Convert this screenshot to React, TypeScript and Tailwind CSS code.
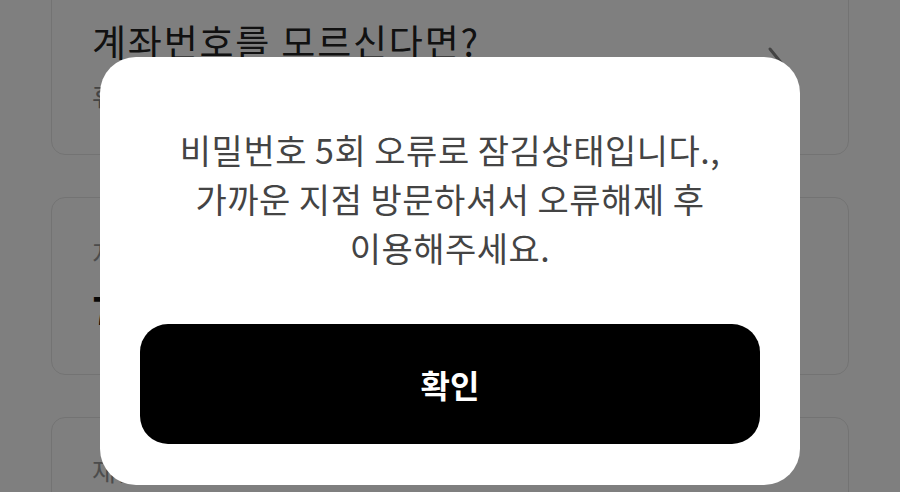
import React from "react";

export default function App() {
  return (
    <div className="relative h-[492px] w-[900px] overflow-hidden bg-white font-['Noto_Sans_CJK_KR','Noto_Sans',sans-serif]">
      <div className="flex flex-col gap-[42px] px-[51px] -mt-[20px]">
        <div className="flex items-center justify-between rounded-[14px] border border-[#e6e6e6] pl-[40px] pr-[62px] pt-[37px] pb-[42px]">
          <div className="flex flex-col">
            <div className="text-[37px] leading-[46px] tracking-[1.8px] text-[#222]">계좌번호를 모르신다면?</div>
            <div className="mt-[14px] text-[26px] leading-[34px] text-[#888]">휴대폰 본인인증으로 조회할 수 있어요</div>
          </div>
          <svg width="20" height="40" viewBox="0 0 20 40" fill="none">
            <path d="M4 4 L17 20 L4 36" stroke="#888" strokeWidth="3" strokeLinecap="round" strokeLinejoin="round" />
          </svg>
        </div>
        <div className="flex flex-col rounded-[14px] border border-[#e6e6e6] px-[40px] pt-[38px] pb-[41px]">
          <div className="text-[26px] leading-[34px] text-[#999]">지급계좌</div>
          <div className="mt-[15px] text-[38px] leading-[48px] font-bold text-[#111]">7,000,000원</div>
        </div>
        <div className="flex h-[120px] flex-col rounded-[14px] border border-[#e6e6e6] px-[40px] pt-[36px]">
          <div className="text-[26px] leading-[32px] text-[#999]">재발급 사유</div>
        </div>
      </div>

      <div className="absolute inset-0 flex items-start justify-center bg-black/50 pt-[57px]">
        <div className="flex w-[700px] flex-col rounded-[36px] bg-white px-[40px] pt-[68px] pb-[41px]">
          <div className="text-center text-[34px] leading-[49px] tracking-[0.5px] text-[#444]">
            비밀번호 5회 오류로 잠김상태입니다.,
            <br />
            가까운 지점 방문하셔서 오류해제 후
            <br />
            이용해주세요.
          </div>
          <button className="mt-[52px] flex h-[120px] w-full items-center justify-center rounded-[28px] bg-black text-[32px] font-bold text-white">
            확인
          </button>
        </div>
      </div>
    </div>
  );
}
